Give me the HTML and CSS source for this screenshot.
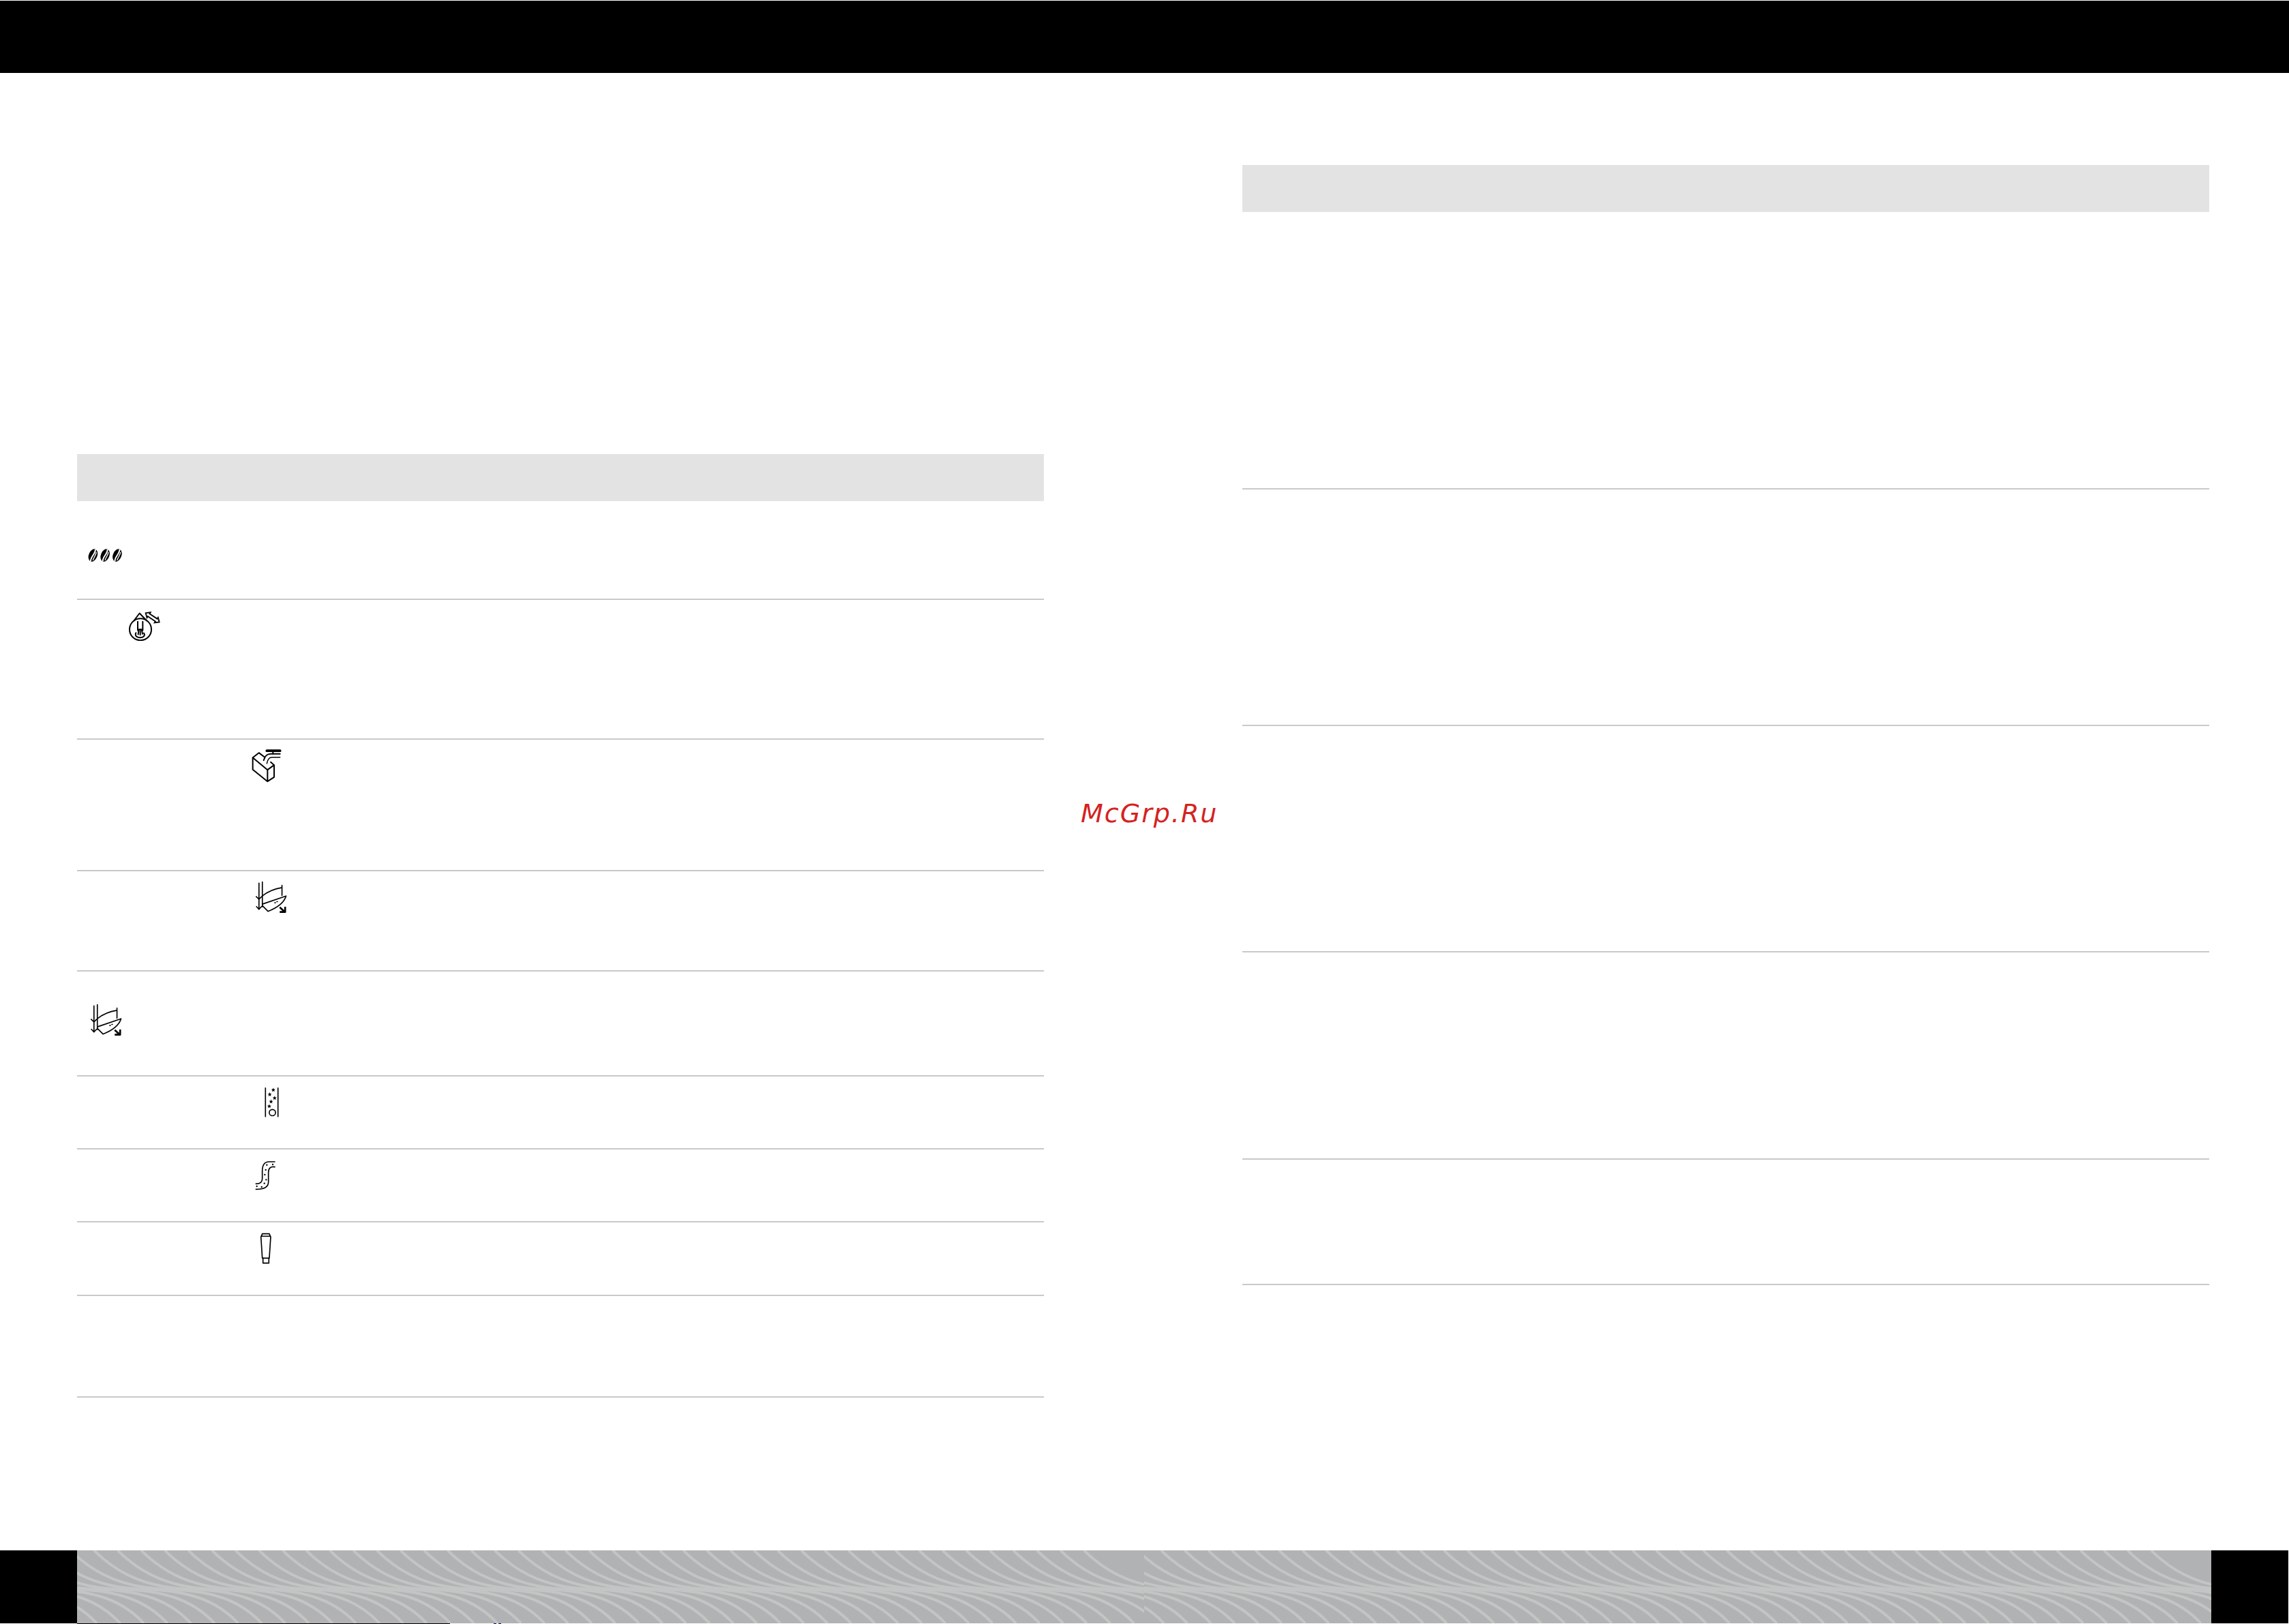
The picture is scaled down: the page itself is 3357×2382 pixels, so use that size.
FILE: index.html
```html
<!DOCTYPE html>
<html lang="ru">
<head>
<meta charset="utf-8">
<title>McGrp.Ru</title>
<link rel="stylesheet" href="styles.css">
</head>
<body>
<header class="top-band"></header>

<main class="spread">
  <section class="table table-left">
    <div class="table-head"></div>

    <div class="row row-beans">
      <svg class="ico ico-beans" viewBox="85 130 160 70">
        <g id="bean-set">
          <g transform="rotate(22 110 165)"><ellipse cx="110" cy="165" rx="19" ry="29" class="solid"/><path d="M110 137 C118 155 102 175 110 193" class="slit"/><path d="M118 146 C122 158 116 176 118 186" class="slit-thin"/></g>
          <g transform="rotate(22 164 165)"><ellipse cx="164" cy="165" rx="19" ry="29" class="solid"/><path d="M164 137 C172 155 156 175 164 193" class="slit"/><path d="M172 146 C176 158 170 176 172 186" class="slit-thin"/></g>
          <g transform="rotate(22 218 165)"><ellipse cx="218" cy="165" rx="19" ry="29" class="solid"/><path d="M218 137 C226 155 210 175 218 193" class="slit"/><path d="M226 146 C230 158 224 176 226 186" class="slit-thin"/></g>
        </g>
      </svg>
    </div>

    <div class="row row-drop">
      <svg class="ico ico-drop" viewBox="50 10 150 140">
        <g class="line">
          <circle cx="107" cy="100" r="48"/>
          <path d="M78 62 L103 29 L135 62"/>
          <path d="M95 66 V104 M117 66 V104 M95 100 H117"/>
          <path d="M106 100 V124 M99 104 L97 122 M113 104 L116 120"/>
          <path d="M87 115 C82 126 88 136 106 136 C124 136 128 124 122 116"/>
          <path class="arrow-outline" d="M130 28 L151 25.200 L147.200 31 L180.600 53.400 L184.400 47.600 L190 68 L169 70.800 L172.800 65 L139.400 42.600 L135.600 48.400 Z"/>
        </g>
      </svg>
    </div>

    <div class="row row-box">
      <svg class="ico ico-box" viewBox="85 50 135 155">
        <g class="line">
          <path d="M93 92 L120 71 L145 90 M172 112 L187 125 L158 146 L93 92 V145 L158 197 L187 178 V125 M158 146 V197"/>
          <path d="M213 76 H172 C155 76 147 84 141 104"/>
          <path class="thin" d="M213 91 H178 C166 91 159 98 155 118"/>
          <path class="heavy" d="M155 62 H213"/>
          <path d="M182 62 V76"/>
        </g>
      </svg>
    </div>

    <div class="row row-hood">
      <svg class="ico ico-hood" viewBox="100 635 150 145">
        <use href="#hood-art"/>
      </svg>
    </div>

    <div class="row row-hood-alt">
      <svg class="ico ico-hood" viewBox="100 635 150 145">
        <g id="hood-art" class="line line-fine">
          <path d="M120 645 V760 M135 640 V750"/>
          <path d="M108 705 L120 716 L132 705 M109 749 L120 761 L131 749"/>
          <path d="M135 702 C160 682 190 670 222 665 M222 655 V700"/>
          <path d="M135 738 L240 702 C232 730 205 752 160 770 L135 745"/>
          <path d="M190 732 H193 M199 727 H202"/>
          <path class="heavy-arrow" d="M212 752 L232 770 M236 750 V773 H212"/>
        </g>
      </svg>
    </div>

    <div class="row row-tube">
      <svg class="ico ico-tube" viewBox="140 68 70 140">
        <path class="line line-fine" d="M147 75 V203 M203 75 V203"/>
        <circle class="line line-fine" cx="178" cy="185" r="14"/>
        <g class="star-set">
          <polygon points="182,74 184.500,80.500 191,81 186,85.500 188,92 182,88 176,92 178,85.500 173,81 179.500,80.500"/>
          <polygon points="166,94 168.500,100.500 175,101 170,105.500 172,112 166,108 160,112 162,105.500 157,101 163.500,100.500"/>
          <polygon points="188,110 190.500,116.500 197,117 192,121.500 194,128 188,124 182,128 184,121.500 179,117 185.500,116.500"/>
          <polygon points="172,126 174.500,132.500 181,133 176,137.500 178,144 172,140 166,144 168,137.500 163,133 169.500,132.500"/>
          <polygon points="164,147 166.500,153.500 173,154 168,158.500 170,165 164,161 158,165 160,158.500 155,154 161.500,153.500"/>
        </g>
      </svg>
    </div>

    <div class="row row-pipe">
      <svg class="ico ico-pipe" viewBox="100 392 96 138">
        <path class="line line-fine" d="M190 401 H165 C142 401 135 420 135 442 V475 C135 492 125 498 107 498"/>
        <path class="line line-fine" d="M190 424 C172 420 162 430 162 448 V490 C162 514 142 522 107 522"/>
        <path class="line dots" d="M155 415 h.1 M181 413 h.1 M150 437 h.1 M146 458 h.1 M152 480 h.1 M144 496 h.1 M111 509 h.1 M132 512 h.1"/>
      </svg>
    </div>

    <div class="row row-bottle">
      <svg class="ico ico-bottle" viewBox="120 712 60 145">
        <path class="line line-fine" d="M128 735 L134 828 H165 L171 735 L165 720 H134 Z M128 731 H171"/>
        <path class="line line-fine" d="M137 828 V850 H163 V828"/>
      </svg>
    </div>

    <div class="row row-last"></div>
  </section>

  <section class="table table-right">
    <div class="table-head"></div>
    <div class="row row-a"></div>
    <div class="row row-b"></div>
    <div class="row row-c"></div>
    <div class="row row-d"></div>
    <div class="row row-e"></div>
  </section>

  <div class="watermark">McGrp.Ru</div>
</main>

<footer class="bottom">
  <div class="bottom-band">
    <div class="black-block"></div>
    <svg class="waves" viewBox="0 0 3130 107">
      <defs>
        <path id="strand" d="M0 0 C35 35 80 57 150 57 H165 C245 57 285 75 315 107"/>
        <g id="tile" class="wave-lines">
          <use href="#strand" x="-286.13"/><use href="#strand" x="-251.56"/><use href="#strand" x="-216.99"/><use href="#strand" x="-182.42"/><use href="#strand" x="-147.85"/><use href="#strand" x="-113.28"/><use href="#strand" x="-78.71"/><use href="#strand" x="-44.14"/><use href="#strand" x="-9.57"/>
          <use href="#strand" x="25"/><use href="#strand" x="59.57"/><use href="#strand" x="94.14"/><use href="#strand" x="128.71"/><use href="#strand" x="163.28"/><use href="#strand" x="197.85"/><use href="#strand" x="232.42"/><use href="#strand" x="266.99"/><use href="#strand" x="301.56"/><use href="#strand" x="336.13"/>
          <use href="#strand" x="370.7"/><use href="#strand" x="405.27"/><use href="#strand" x="439.84"/><use href="#strand" x="474.41"/><use href="#strand" x="508.98"/><use href="#strand" x="543.55"/><use href="#strand" x="578.12"/><use href="#strand" x="612.69"/><use href="#strand" x="647.26"/><use href="#strand" x="681.83"/>
          <use href="#strand" x="716.4"/><use href="#strand" x="750.97"/><use href="#strand" x="785.54"/><use href="#strand" x="820.11"/><use href="#strand" x="854.68"/><use href="#strand" x="889.25"/><use href="#strand" x="923.82"/><use href="#strand" x="958.39"/><use href="#strand" x="992.96"/><use href="#strand" x="1027.53"/>
          <use href="#strand" x="1062.1"/><use href="#strand" x="1096.67"/><use href="#strand" x="1131.24"/><use href="#strand" x="1165.81"/><use href="#strand" x="1200.38"/><use href="#strand" x="1234.95"/><use href="#strand" x="1269.52"/><use href="#strand" x="1304.09"/><use href="#strand" x="1338.66"/><use href="#strand" x="1373.23"/>
          <use href="#strand" x="1407.8"/><use href="#strand" x="1442.37"/><use href="#strand" x="1476.94"/>
        </g>
      </defs>
      <svg x="0" y="0" width="1565" height="107" viewBox="0 0 1565 107"><use href="#tile"/></svg>
      <svg x="1565" y="0" width="1565" height="107" viewBox="0 0 1565 107"><use href="#tile"/></svg>
    </svg>
    <div class="black-block black-block-end"></div>
  </div>
  <div class="print-edge">
    <span class="edge-rule"></span>
    <span class="edge-mark"></span>
    <span class="edge-mark"></span>
  </div>
</footer>
</body>
</html>
```

FILE: styles.css
```css
* { box-sizing: border-box; }

html, body {
  margin: 0;
  padding: 0;
  background: #fff;
}

body {
  width: 3357px;
  height: 2382px;
  overflow: hidden;
  padding-top: 1px;
  font-family: "DejaVu Sans", sans-serif;
}

.top-band {
  height: 106px;
  background: #000;
}

.spread {
  position: relative;
  height: 2167px;
  display: flex;
  justify-content: space-between;
  padding: 0 117px 0 113px;
}

.table { width: 1418px; }
.table-left { margin-top: 559px; }
.table-right { margin-top: 135px; }

.table-head {
  height: 69px;
  background: #e3e3e3;
}

.row { border-bottom: 2px solid #c9c9c9; }

.row-beans { height: 145px; padding: 68px 0 0 15px; }
.row-drop { height: 205px; padding: 13px 0 0 74px; }
.row-box { height: 193px; padding: 12px 0 0 255px; }
.row-hood { height: 147px; padding: 14px 0 0 260px; }
.row-hood-alt { height: 154px; padding: 47px 0 0 18px; }
.row-tube { height: 107px; padding: 14px 0 0 274px; }
.row-pipe { height: 107px; padding: 15px 0 0 260px; }
.row-bottle { height: 108px; padding: 14px 0 0 267px; }
.row-last { height: 149px; }

.row-a { height: 407px; }
.row-b { height: 347px; }
.row-c { height: 332px; }
.row-d { height: 304px; }
.row-e { height: 184px; }

.ico { display: block; }
.ico-beans { width: 53px; height: 23px; }
.ico-drop { width: 50px; height: 47px; }
.ico-box { width: 45px; height: 52px; }
.ico-hood { width: 50px; height: 48px; }
.ico-tube { width: 23px; height: 47px; }
.ico-pipe { width: 32px; height: 46px; }
.ico-bottle { width: 20px; height: 48px; }

.line {
  fill: none;
  stroke: #000;
  stroke-width: 6;
  stroke-linejoin: round;
  stroke-linecap: round;
}
.line-fine { stroke-width: 5; }
.thin { stroke-width: 4.5; }
.arrow-outline { stroke-width: 5.5; stroke-linejoin: miter; }
.heavy { stroke-width: 11; }
.heavy-arrow { stroke-width: 8; stroke-linecap: butt; }
.dots { stroke-width: 7; }

.solid { fill: #000; }
.slit {
  fill: none;
  stroke: #fff;
  stroke-width: 6;
}
.slit-thin {
  fill: none;
  stroke: #fff;
  stroke-width: 4;
}
.star-set { fill: #000; }

.watermark {
  position: absolute;
  left: 1585px;
  top: 1063px;
  font-size: 38px;
  line-height: 46px;
  font-style: italic;
  letter-spacing: 2px;
  color: #d42222;
  white-space: nowrap;
}

.bottom-band {
  display: flex;
  height: 107px;
}

.black-block {
  width: 113px;
  height: 107px;
  flex: none;
  background: #000;
}
.black-block-end { width: 113px; }

.waves {
  display: block;
  width: 3130px;
  height: 107px;
  flex: none;
  background: #b1b2b3;
}

.wave-lines {
  fill: none;
  stroke: #c3c5c4;
  stroke-width: 4;
}

.print-edge {
  display: flex;
  height: 1px;
  padding-left: 113px;
}

.edge-rule {
  width: 547px;
  margin-right: 64px;
  background: #000;
}

.edge-mark {
  width: 4px;
  margin-right: 3px;
  background: #14145a;
}
```
